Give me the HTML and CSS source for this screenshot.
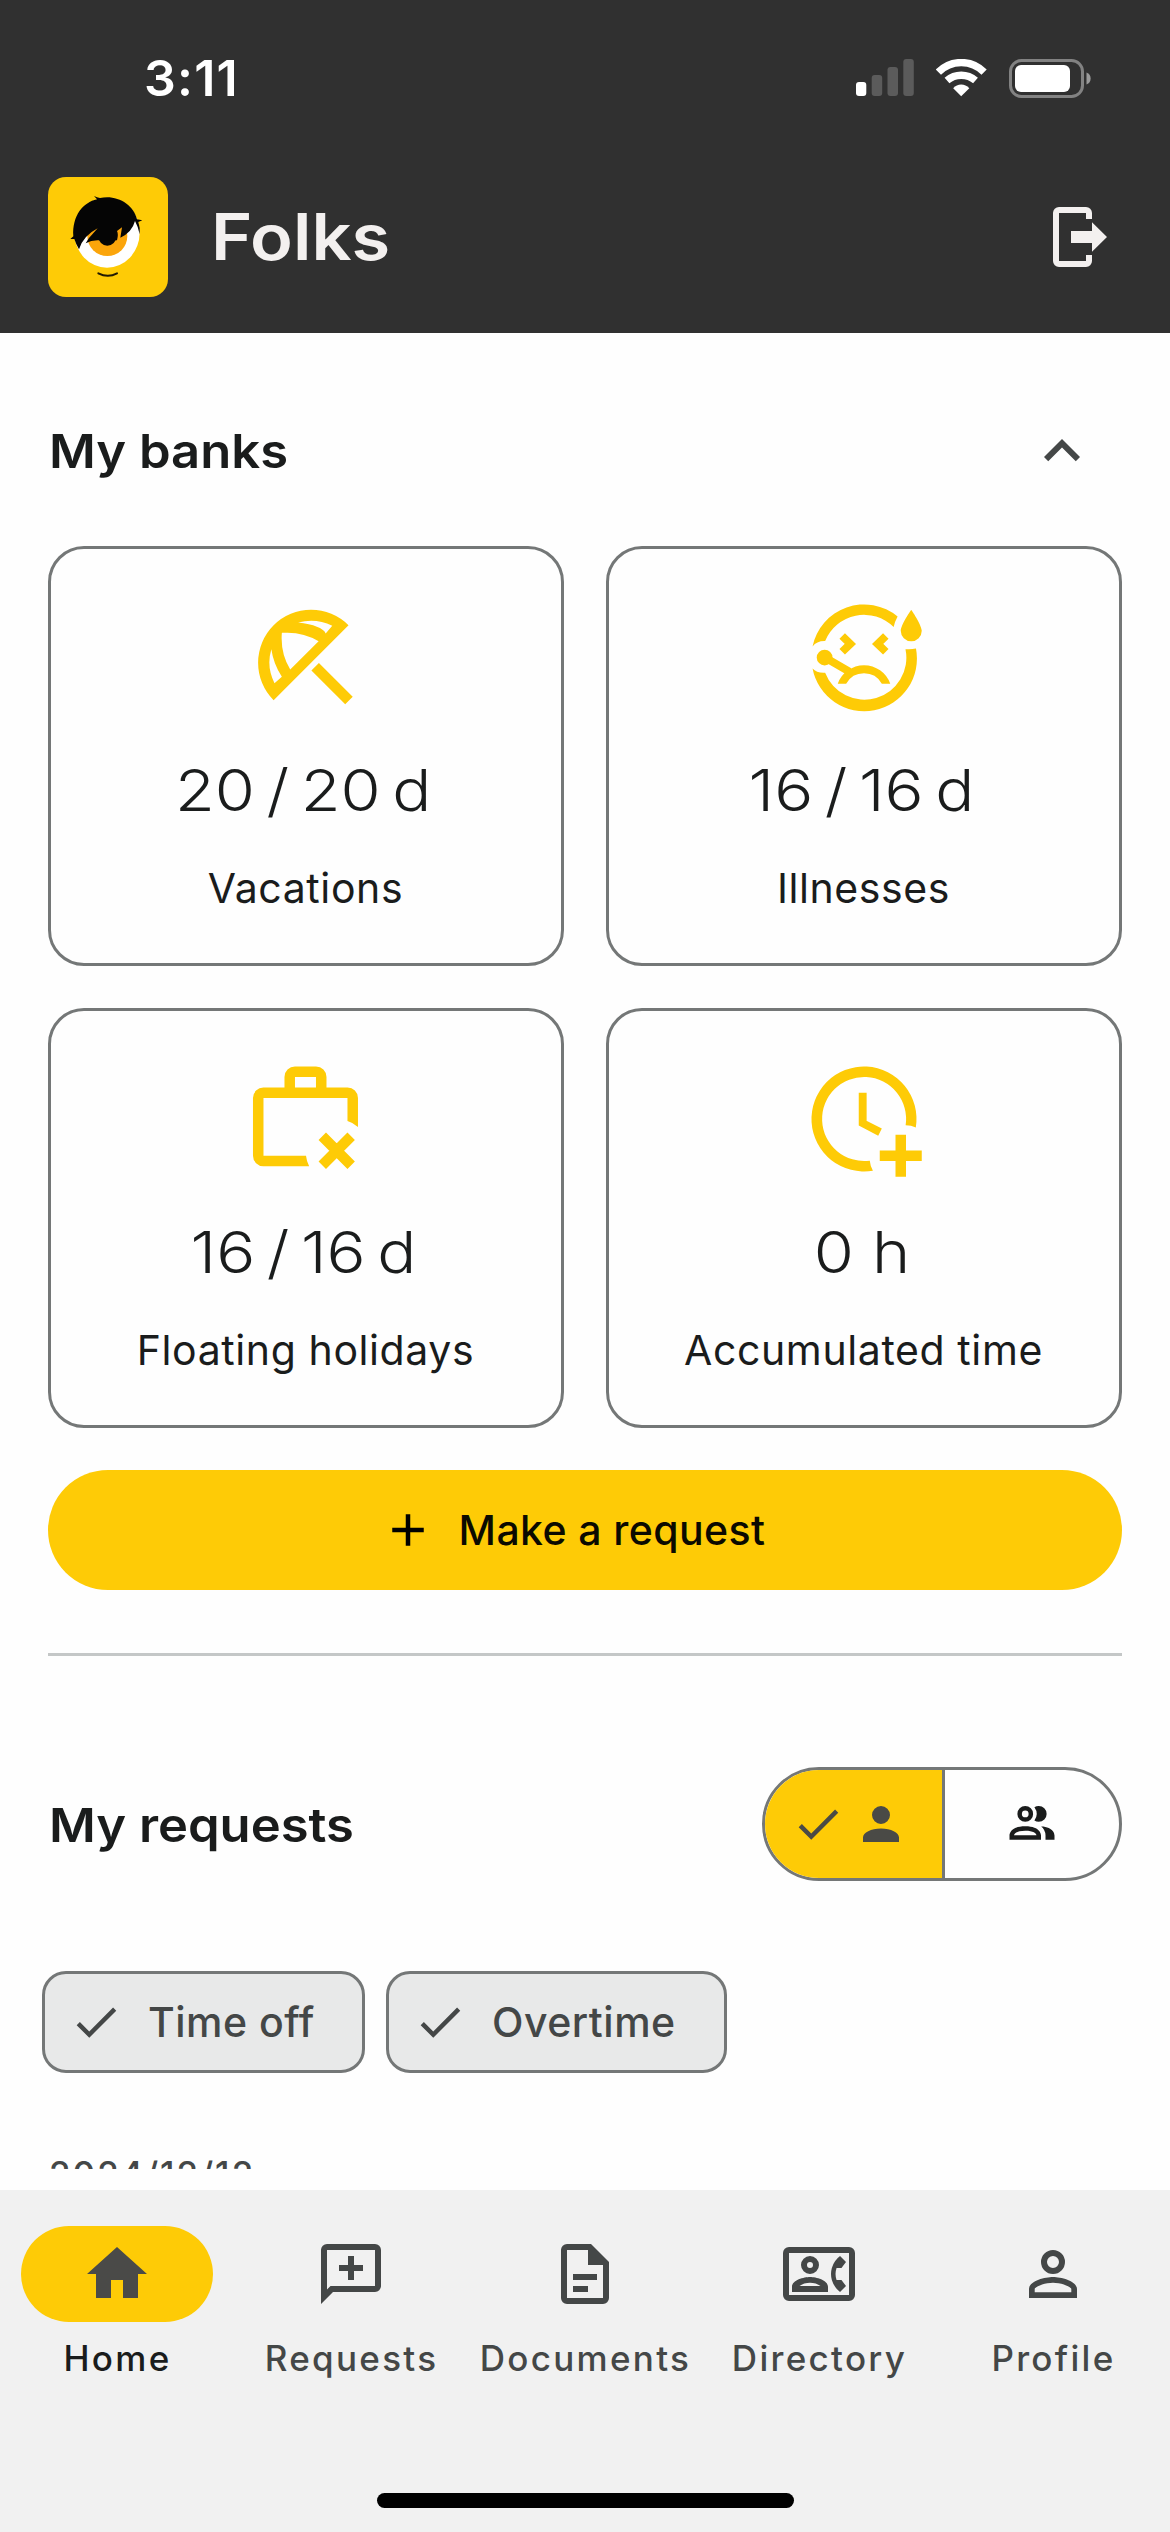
FILE: index.html
```html
<!DOCTYPE html>
<html lang="en">
<head>
<meta charset="utf-8">
<title>Folks</title>
<link rel="stylesheet" href="styles.css">
</head>
<body>
<div class="screen">
  <header class="top">
    <div class="status">
      <span class="time">3:11</span>
      <div class="status-icons">
        <svg width="58" height="38" viewBox="0 0 58 38">
          <rect x="0" y="23" width="10.3" height="14" rx="3" fill="#fff"/>
          <g fill="#5b5b5b"><rect x="15.7" y="16" width="10.5" height="21" rx="3"/><rect x="31.5" y="8" width="10.5" height="29" rx="3"/><rect x="47.3" y="0" width="10.5" height="37" rx="3"/></g>
        </svg>
        <svg width="51" height="38" viewBox="0 0 51 38">
          <g fill="none" stroke="#fff" stroke-width="7.3"><path d="M2.4 13.1A32 32 0 0 1 48.1 13.1"/><path d="M11 21.6A21.6 21.6 0 0 1 39.5 21.6"/></g>
          <path d="M25.2 37.3L17.2 29.2Q20.6 25.6 25.2 25.6T33.3 29.2Z" fill="#fff"/>
        </svg>
        <svg width="82" height="39" viewBox="0 0 82 39">
          <rect x="1.5" y="1.5" width="72" height="36" rx="11" fill="none" stroke="#828282" stroke-width="3"/>
          <rect x="6" y="6" width="55" height="27" rx="6" fill="#fff"/>
          <path d="M77.5 13.5C83 15 83 24 77.5 25.5Z" fill="#9a9a9a"/>
        </svg>
      </div>
    </div>
    <div class="appbar">
      <svg class="logo" viewBox="0 0 360 360">
        <rect width="360" height="360" rx="54" fill="#fecb06"/>
        <ellipse cx="177" cy="167" rx="98" ry="105" fill="#fff"/>
        <circle cx="178" cy="177" r="60" fill="#fba50b"/>
        <circle cx="178" cy="179" r="27" fill="#050505"/>
        <path fill="#050505" d="M93 217Q84 202 79 186L67 186L76 178C72 116 106 76 147 67L138 57Q147 62 156 63C206 52 257 82 267 127L283 130L271 135Q277 151 275 172Q271 150 261 132Q252 166 217 182L222 151L207 162Q212 172 207 190L155 190Q132 188 113 199Q122 182 133 172L149 154Q106 176 93 217Z"/>
        <path d="M151 289Q180 304 207 289" fill="none" stroke="#211a04" stroke-width="6" stroke-linecap="round"/>
      </svg>
      <h1 class="brand">Folks</h1>
      <svg class="icon72" viewBox="0 0 24 24" fill="#f3f0ef"><path d="M16 6h-2V4H5v16h9v-2h2v2a2 2 0 0 1-2 2H5a2 2 0 0 1-2-2V4a2 2 0 0 1 2-2h9a2 2 0 0 1 2 2zM9 10h7V7.1l5 4.9-5 4.9V14H9z"/></svg>
    </div>
  </header>

  <main class="content">
    <div class="section-head">
      <h2>My banks</h2>
      <svg class="icon72" viewBox="0 0 24 24" fill="#444747"><path d="M7.41 15.41 12 10.83l4.59 4.58L18 14l-6-6-6 6z"/></svg>
    </div>
    <div class="banks">
      <div class="card">
        <svg class="bank-icon" viewBox="0 0 24 24"><path fill-rule="evenodd" d="M20.1 5.95L5.83 20.22A10 10 0 0 1 20.1 5.95ZM10.5 5.45Q15 6 15.75 7.5L17 6.05Q13.8 4.5 10.5 5.45ZM5.4 10.5Q4.4 13.8 6 17L7.4 15.75Q5.8 13.3 5.4 10.5ZM7.45 7.4Q11.3 7.1 14.4 9L9 14.4Q7.1 11.3 7.4 7.45ZM20.9 19.57L19.47 21L13.03 14.56L14.46 13.13Z"/></svg>
        <div class="amount">20 / 20 d</div>
        <div class="label">Vacations</div>
      </div>
      <div class="card">
        <svg class="bank-icon" viewBox="0 0 24 24">
          <path d="M2.2 10A10 10 0 0 1 18.4 4.3Q17.8 5.4 17.65 6.3A8 8 0 0 0 4.6 8.95Q3 8.9 2.2 10ZM21.9 10.4A10 10 0 0 1 2.2 14.2Q3 15.1 4.6 15A8 8 0 0 0 19.9 10.5Q20.9 10.6 21.9 10.4ZM21 9a2 2 0 0 1-2-2c0-1.1 2-4 2-4s2 2.9 2 4a2 2 0 0 1-2 2ZM7 17.1A5.3 5.3 0 0 1 17 17.1H15.4A3.9 3.9 0 0 0 8.6 17.1Z"/>
          <circle cx="4.5" cy="12.1" r="1.5"/>
          <path d="M7.85 8L9.4 9.5L7.85 11M16.15 8L14.6 9.5L16.15 11M4.6 12.1L9.2 14.8" class="line"/>
        </svg>
        <div class="amount">16 / 16 d</div>
        <div class="label">Illnesses</div>
      </div>
      <div class="card">
        <svg class="bank-icon" viewBox="0 0 24 24">
          <path fill-rule="evenodd" d="M7.9 6V4a2 2 0 0 1 2-2h4a2 2 0 0 1 2 2V6H19.9a2 2 0 0 1 2 2V13.5Q20.9 12.7 19.9 12.4V8H3.9V19H12Q12.1 20 12.6 21H3.9a2 2 0 0 1-2-2V8a2 2 0 0 1 2-2ZM9.9 6H13.9V4H9.9Z"/>
          <path d="M15.1 15.3L20.6 20.8M20.6 15.3L15.1 20.8" class="line thick"/>
        </svg>
        <div class="amount">16 / 16 d</div>
        <div class="label">Floating holidays</div>
      </div>
      <div class="card">
        <svg class="bank-icon" viewBox="0 0 24 24">
          <path d="M21.87 13.6A10 10 0 1 0 13.7 21.85Q13.2 21 13.1 19.93A8 8 0 1 1 19.93 13.2Q21 13.2 21.87 13.6Z"/>
          <path d="M11.75 7V12.8L15.05 14.5" class="line"/>
          <path d="M19 15V23M15 19H23" class="line thick"/>
        </svg>
        <div class="amount hours">0 h</div>
        <div class="label">Accumulated time</div>
      </div>
    </div>
    <button class="request">
      <svg class="icon54" viewBox="0 0 24 24"><path d="M19 13h-6v6h-2v-6H5v-2h6V5h2v6h6z"/></svg>
      <span>Make a request</span>
    </button>
    <hr class="divider">

    <div class="requests-head">
      <h2>My requests</h2>
      <div class="segmented">
        <div class="segment selected">
          <svg class="icon54" viewBox="0 0 24 24"><path d="M9 16.17 4.83 12l-1.42 1.41L9 19 21 7l-1.41-1.41z"/></svg>
          <svg class="icon54" viewBox="0 0 24 24"><path d="M12 4a4 4 0 1 1 0 8 4 4 0 0 1 0-8zM12 14c4.42 0 8 1.79 8 4v2H4v-2c0-2.21 3.58-4 8-4z"/></svg>
        </div>
        <div class="segment">
          <svg class="icon54" viewBox="0 0 24 24"><path d="M13.07 10.41a5 5 0 0 0 0-5.82A3.39 3.39 0 0 1 15 4a3.5 3.5 0 0 1 0 7 3.39 3.39 0 0 1-1.93-.59zM5.5 7.5A3.5 3.5 0 1 1 9 11a3.5 3.5 0 0 1-3.5-3.5m2 0A1.5 1.5 0 1 0 9 6a1.5 1.5 0 0 0-1.5 1.5M16 17v2H2v-2s0-4 7-4 7 4 7 4m-2 0c-.14-.78-1.33-2-5-2s-4.93 1.31-5 2m11.95-4A5.32 5.32 0 0 1 18 17v2h4v-2s0-3.63-6.06-4z"/></svg>
        </div>
      </div>
    </div>
    <div class="chips">
      <div class="chip"><svg class="icon54" viewBox="0 0 24 24"><path d="M9 16.17 4.83 12l-1.42 1.41L9 19 21 7l-1.41-1.41z"/></svg><span>Time off</span></div>
      <div class="chip wide"><svg class="icon54" viewBox="0 0 24 24"><path d="M9 16.17 4.83 12l-1.42 1.41L9 19 21 7l-1.41-1.41z"/></svg><span>Overtime</span></div>
    </div>
    <div class="date">2024/12/12</div>
  </main>

  <nav class="nav">
    <div class="tabs">
      <div class="tab active">
        <div class="pill"><svg class="icon72" viewBox="0 0 24 24"><path d="M10 20v-6h4v6h5v-8h3L12 3 2 12h3v8z"/></svg></div>
        <span>Home</span>
      </div>
      <div class="tab">
        <div class="pill"><svg class="icon72" viewBox="0 0 24 24"><path d="M20 2H4a2 2 0 0 0-2 2v18l4-4h14a2 2 0 0 0 2-2V4a2 2 0 0 0-2-2m0 14H5.17L4 17.17V4h16zM11 6h2v3h3v2h-3v3h-2v-3H8V9h3z"/></svg></div>
        <span>Requests</span>
      </div>
      <div class="tab">
        <div class="pill"><svg class="icon72" viewBox="0 0 24 24"><path fill-rule="evenodd" d="M6 2a2 2 0 0 0-2 2v16a2 2 0 0 0 2 2h12a2 2 0 0 0 2-2V8l-6-6zm0 2h7v5h5v11H6zM8 12h8v2H8zM8 16h5v2H8z"/></svg></div>
        <span>Documents</span>
      </div>
      <div class="tab">
        <div class="pill"><svg class="icon72" viewBox="0 0 24 24"><path fill-rule="evenodd" d="M22 3H2a2 2 0 0 0-2 2v14a2 2 0 0 0 2 2h20a2 2 0 0 0 2-2V5a2 2 0 0 0-2-2m0 16H2V5h20z"/><path fill-rule="evenodd" d="M9 6a3 3 0 1 1 0 6 3 3 0 0 1 0-6m0 2a1 1 0 1 0 0 2 1 1 0 0 0 0-2M15 18H3v-1.75C3 14 7 13 9 13s6 1 6 3.25zM5.5 16h7c-.8-.7-2.3-1.1-3.5-1.1s-2.7.4-3.5 1.1"/><path d="M17.85 14h1.64L21 16l-1.99 1.99A7.51 7.51 0 0 1 16.28 14a7.45 7.45 0 0 1 0-4 7.58 7.58 0 0 1 2.73-3.99L21 8l-1.51 2h-1.64a6.2 6.2 0 0 0 0 4"/></svg></div>
        <span>Directory</span>
      </div>
      <div class="tab">
        <div class="pill"><svg class="icon72" viewBox="0 0 24 24"><path fill-rule="evenodd" d="M12 4a4 4 0 1 1 0 8 4 4 0 0 1 0-8m0 2a2 2 0 1 0 0 4 2 2 0 0 0 0-4m0 7c2.67 0 8 1.33 8 4v3H4v-3c0-2.67 5.33-4 8-4m0 1.9c-2.97 0-6.1 1.46-6.1 2.1v1.1h12.2V17c0-.64-3.13-2.1-6.1-2.1"/></svg></div>
        <span>Profile</span>
      </div>
    </div>
    <div class="home-indicator"></div>
  </nav>
</div>
</body>
</html>
```
FILE: styles.css
```css
* { box-sizing: border-box; }

body {
  margin: 0;
  font-family: Inter, "Liberation Sans", sans-serif;
  color: #1a1c1c;
  background: #fefefe;
}

svg { display: block; flex: none; }
h1, h2 { margin: 0; font-weight: 600; }

.screen {
  width: 1170px;
  height: 2532px;
  display: flex;
  flex-direction: column;
  overflow: hidden;
}

/* Header */
.top {
  height: 333px;
  flex: none;
  background: #303030;
}
.status {
  height: 156px;
  padding: 0 79px 0 144px;
  display: flex;
  align-items: center;
  justify-content: space-between;
}
.time {
  font-size: 50px;
  font-weight: 600;
  letter-spacing: 1.2px;
  color: #fff;
}
.status-icons {
  display: flex;
  align-items: center;
  gap: 22px;
}
.appbar {
  height: 162px;
  padding: 0 54px 0 48px;
  display: flex;
  align-items: center;
}
.logo { width: 120px; height: 120px; }

.brand {
  margin: 0 auto 2px 43px;
  font-size: 64px;
  color: #f3f0ef;
  transform: scaleX(1.1);
  transform-origin: left;
}
.icon72 { width: 72px; height: 72px; }
.icon54 { width: 54px; height: 54px; }

/* Scrolling content */
.content {
  height: 1836px;
  flex: none;
  padding: 60px 48px 0;
  overflow: hidden;
}
h2 {
  font-size: 47px;
  transform: scaleX(1.08);
  transform-origin: left;
}
.section-head {
  height: 116px;
  padding: 0 24px 0 1px;
  margin-bottom: 37px;
  display: flex;
  align-items: center;
  justify-content: space-between;
}
.section-head h2 { margin-bottom: 2px; }
.banks {
  display: grid;
  grid-template-columns: 1fr 1fr;
  gap: 42px;
}
.card {
  height: 420px;
  padding-top: 45px;
  border: 3px solid #747777;
  border-radius: 36px;
  display: flex;
  flex-direction: column;
  align-items: center;
}
.bank-icon {
  width: 126px;
  height: 126px;
  fill: #fecb06;
}
.line {
  fill: none;
  stroke: #fecb06;
  stroke-width: 1.5;
}
.thick { stroke-width: 2; }
.amount {
  margin-top: 34px;
  padding-right: 5px;
  font-size: 58px;
  font-weight: 300;
  line-height: 72px;
  word-spacing: -6px;
  transform: scaleX(1.12);
}
.hours { word-spacing: 0; padding-right: 3px; }
.label {
  margin-top: 32px;
  padding-right: 1px;
  font-size: 41px;
  line-height: 60px;
  letter-spacing: 0.6px;
}
.request {
  width: 100%;
  height: 120px;
  margin: 42px 0 0;
  padding: 0 24px 0 0;
  border: 0;
  border-radius: 60px;
  background: #fecb06;
  color: #0b0a00;
  font: 500 41px Inter, "Liberation Sans", sans-serif;
  letter-spacing: 0.4px;
  display: flex;
  align-items: center;
  justify-content: center;
  gap: 24px;
}
.divider {
  height: 3px;
  margin: 63px 0 0;
  border: 0;
  background: #c4c7c7;
}
.requests-head {
  margin-top: 111px;
  padding-left: 1px;
  display: flex;
  align-items: center;
  justify-content: space-between;
}
.segmented {
  width: 360px;
  height: 114px;
  border: 3px solid #747777;
  border-radius: 57px;
  overflow: hidden;
  display: flex;
}
.segment {
  flex: 1;
  display: flex;
  align-items: center;
  justify-content: center;
  fill: #1a1c1c;
}
.segment.selected {
  flex: none;
  width: 180px;
  padding: 0 0 0 26px;
  gap: 9px;
  justify-content: flex-start;
  background: #fecb06;
  border-right: 3px solid #747777;
  fill: #4a4a46;
}
.chips {
  margin: 90px 0 0 -6px;
  display: flex;
  gap: 21px;
}
.chip {
  width: 323px;
  height: 102px;
  padding-left: 24px;
  border: 3px solid #747777;
  border-radius: 24px;
  background: #e8e9e9;
  color: #444747;
  fill: #444747;
  font-size: 41px;
  font-weight: 500;
  letter-spacing: 0.5px;
  display: flex;
  align-items: center;
  gap: 25px;
}
.chip.wide { width: 341px; }
.date {
  margin-top: 76px;
  padding-left: 1px;
  font-size: 35px;
  font-weight: 500;
  line-height: 50px;
  letter-spacing: 2px;
  color: #444747;
}

/* Bottom navigation */
.nav {
  height: 342px;
  margin-top: 21px;
  flex: none;
  padding: 36px 0 24px;
  background: #f1f1f1;
  display: flex;
  flex-direction: column;
  justify-content: space-between;
  align-items: center;
}
.tabs {
  width: 100%;
  display: grid;
  grid-template-columns: repeat(5, 1fr);
}
.tab {
  display: flex;
  flex-direction: column;
  align-items: center;
  gap: 12px;
  font-size: 35px;
  font-weight: 500;
  line-height: 48px;
  letter-spacing: 2.3px;
  color: #444747;
}
.tab span { padding-left: 1px; }
.pill {
  width: 192px;
  height: 96px;
  padding-right: 1px;
  border-radius: 48px;
  display: flex;
  align-items: center;
  justify-content: center;
  fill: #444747;
}
.active { color: #1a1c1c; }
.active .pill { background: #fecb06; fill: #4a4a48; }
.home-indicator {
  width: 417px;
  height: 15px;
  border-radius: 8px;
  background: #000;
}
```
